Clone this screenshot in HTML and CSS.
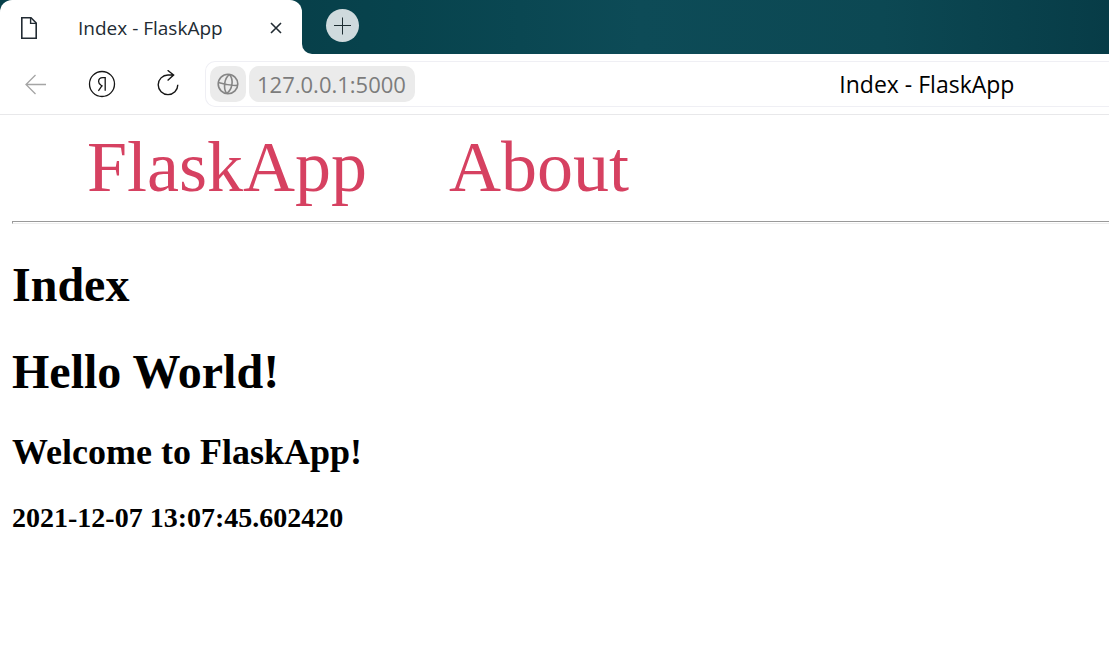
FILE: index.html
```html
<!DOCTYPE html>
<html lang="en">
<head>
<meta charset="utf-8">
<title>Index - FlaskApp</title>
<link rel="stylesheet" href="styles.css">
</head>
<body>
<header class="browser">
  <div class="tabstrip">
    <div class="tab">
      <svg class="tab-icon" width="18" height="24" viewBox="0 0 18 24" fill="none" stroke="#222b33" stroke-width="1.6"><path d="M1.8 1.8H11L16.2 7V22.2H1.8Z"/><path d="M10.6 2V7.4H16" stroke-width="1.4"/></svg>
      <span class="tab-title">Index - FlaskApp</span>
      <button class="tab-close" aria-label="Close tab"><svg width="12" height="12" viewBox="0 0 12 12" fill="none" stroke="#222b33" stroke-width="1.6"><path d="M1 1L11 11M11 1L1 11"/></svg></button>
    </div>
    <div class="strip-rest">
      <button class="new-tab" aria-label="New tab"><svg width="18" height="18" viewBox="0 0 18 18" fill="none" stroke="#1d2c31" stroke-width="1"><path d="M8.5 .5V17.5M0 8.5H17"/></svg></button>
    </div>
  </div>
  <div class="toolbar">
    <button class="tool" aria-label="Back"><svg width="28" height="28" viewBox="0 0 28 28" fill="none" stroke="#a5a5a5" stroke-width="1.3"><path d="M24 14.5H4.2M13.5 5L4 14.5L13.5 24"/></svg></button>
    <button class="tool" aria-label="Yandex home"><svg width="28" height="28" viewBox="0 0 28 28" fill="none" stroke="#151515" stroke-width="1.3"><circle cx="14" cy="14" r="12.5"/><path d="M17.2 20.8V7.6H14.8C12 7.6 10.6 9.2 10.6 11.6C10.6 13 11.4 14 12.8 15L14.6 16.2M14 15.6L10.4 20.8"/></svg></button>
    <button class="tool" aria-label="Reload"><svg width="28" height="28" viewBox="0 0 28 28" fill="none" stroke="#151515" stroke-width="1.4"><path d="M23.8 14.8A9.8 9.8 0 1 1 14 5H19.4M13.6 .3L19.6 5L13.6 10.4"/></svg></button>
    <div class="address">
      <button class="chip site" aria-label="Site information"><svg width="22" height="22" viewBox="0 0 22 22" fill="none" stroke="#858585" stroke-width="1.6"><circle cx="11" cy="11" r="9.8"/><path d="M12.6 1.4C7.2 5.2 6 15 9.6 20.6M12.6 1.4C16.8 6.6 15.6 16.4 9.6 20.6M1.3 9.6C7 11.4 14.4 12.8 20.7 12.4"/></svg></button>
      <button class="chip host">127.0.0.1:5000</button>
      <span class="page-title">Index - FlaskApp</span>
    </div>
  </div>
</header>
<main class="page">
  <nav class="menu">
    <a class="menu-link" href="#">FlaskApp</a>
    <a class="menu-link" href="#about">About</a>
  </nav>
  <hr class="rule">
  <h1 class="heading">Index</h1>
  <h1 class="heading">Hello World!</h1>
  <h2 class="subheading">Welcome to FlaskApp!</h2>
  <h3 class="timestamp">2021-12-07 13:07:45.602420</h3>
</main>
</body>
</html>
```
FILE: styles.css
```css
* { box-sizing: border-box; }
body { margin: 0; background: #fff; color: #000; overflow-x: hidden; }
button { border: 0; padding: 0; background: none; font: inherit; color: inherit; display: flex; align-items: center; justify-content: center; }
svg { display: block; }

.browser { font-family: "Open Sans", "Noto Sans", sans-serif; border-bottom: 1px solid #e8e8ea; }
.tabstrip { display: flex; height: 54px; background: linear-gradient(#07404a 0 50%, #fff 50%); }
.tab { flex: none; width: 302px; display: flex; align-items: center; padding: 2px 20px 0; background: #fff; border-radius: 12px 12px 0 0; }
.tab-title { flex: 1; padding-left: 40px; font-size: 19px; line-height: 24px; color: #222b33; white-space: nowrap; }
.tab-close { width: 12px; height: 24px; }
.strip-rest { flex: 1; padding: 9px 24px; border-bottom-left-radius: 10px; background: linear-gradient(90deg, #07404a 0, #07434d 12%, #0d4b57 42%, #0c4853 72%, #073c47 100%); }
.new-tab { width: 33px; height: 33px; border-radius: 50%; background: #cfdadd; }

.toolbar { display: flex; align-items: center; height: 60px; padding-left: 22px; }
.tool { flex: none; width: 28px; height: 28px; margin-right: 38px; }
.address { flex: 1; display: flex; align-items: center; gap: 3px; height: 46px; margin-left: -15px; padding-left: 4px; border: 1px solid #efeff4; border-right: 0; border-radius: 10px 0 0 10px; white-space: nowrap; }
.chip { height: 36px; background: #ebebeb; border-radius: 10px; color: #7c7c7c; }
.site { width: 36px; }
.host { padding: 0 9px 0 8px; font-size: 22px; }
.page-title { margin-left: 38vw; font-size: 23px; line-height: 30px; }

.page { padding: 10px 0 0 12px; font-family: "Liberation Serif", "Times New Roman", serif; }
.menu { display: flex; gap: 82px; padding-left: 75px; }
.menu-link { font-size: 72px; line-height: 84px; color: #d64161; text-decoration: none; }
.rule { height: 3px; margin: 12px 0 33px; border: 1px solid; border-color: #9a9a9a #eee #eee #9a9a9a; border-right: 0; }
.heading { margin: 0 0 32px; font-size: 48px; line-height: 55px; }
.subheading { margin: 0 0 29px; font-size: 36px; line-height: 42px; }
.timestamp { margin: 0; font-size: 28px; line-height: 32px; }
```
